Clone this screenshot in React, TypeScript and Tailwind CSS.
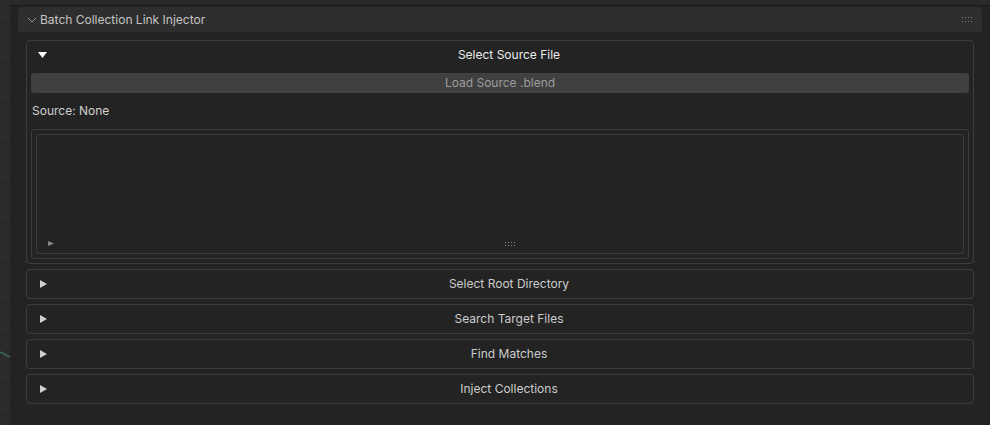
import React from "react";

const font = { fontFamily: "Inter, 'Noto Sans', sans-serif" };

function TriRight() {
  return (
    <svg width="7" height="8" viewBox="0 0 7 8" className="shrink-0 ml-[13px]">
      <path d="M0 0 L7 4 L0 8 Z" fill="currentColor" />
    </svg>
  );
}

function TriDown() {
  return (
    <svg width="9" height="6" viewBox="0 0 9 6" className="shrink-0 ml-[11px]">
      <path d="M0 0 L9 0 L4.5 6 Z" fill="#ffffff" />
    </svg>
  );
}

function Grip() {
  return (
    <svg width="11" height="6" viewBox="0 0 11 6">
      {[0, 3, 6, 9].map((x) => (
        <g key={x}>
          <rect x={x} y={0} width="1" height="1" fill="#7a7a7a" />
          <rect x={x} y={4} width="1" height="1" fill="#7a7a7a" />
        </g>
      ))}
    </svg>
  );
}

function Collapsed({ title }: { title: string }) {
  return (
    <div className="h-[30px] rounded-[4px] border border-[#3d3d3d] flex items-center">
      <div className="w-[18px] shrink-0 flex items-center text-[#d0d0d0]">
        <TriRight />
      </div>
      <div className="flex-1 text-center text-[12px] text-[#cccccc]">{title}</div>
    </div>
  );
}

export default function App() {
  return (
    <div className="w-[990px] h-[425px] flex bg-[#232323] overflow-hidden" style={font}>
      <div className="w-[10px] h-full bg-[#2b2b2b] relative overflow-hidden">
        <svg width="10" height="425" className="absolute inset-0">
          {[20, 60, 100, 140, 180, 220, 260, 300, 330, 380, 410].map((y) => (
            <line key={y} x1="0" y1={y} x2="10" y2={y - 4} stroke="#353535" strokeWidth="1" />
          ))}
          <line x1="0" y1="352" x2="10" y2="357" stroke="#3f6f55" strokeWidth="1.5" />
        </svg>
      </div>
      <div className="flex-1 flex flex-col">
        <div className="h-[6px] bg-[#2a2a2a] border-b border-[#1b1b1b]" />
        <div className="pl-[8px] pr-[8px] pt-[1px] flex-1 flex flex-col">
          <div className="h-[25px] bg-[#2e2e2e] rounded-t-[4px] flex items-center">
            <svg width="10" height="6" viewBox="0 0 10 6" className="ml-[9px] mr-[3px] mt-[1px]">
              <path d="M1 1 L5 5 L9 1" stroke="#9a9a9a" strokeWidth="1" fill="none" />
            </svg>
            <span className="text-[12px] text-[#c4c4c4] mt-[1px]">Batch Collection Link Injector</span>
            <div className="ml-auto mr-[9px] flex items-center mt-[1px]">
              <Grip />
            </div>
          </div>
          <div className="pl-[8px] pr-[8px] pt-[8px] flex flex-col gap-[5px]">
            <div className="rounded-[4px] border border-[#3d3d3d] flex flex-col pb-[4px]">
              <div className="h-[27px] mb-[5px] flex items-center">
                <div className="w-[18px] shrink-0 flex items-center">
                  <TriDown />
                </div>
                <div className="flex-1 text-center text-[12px] text-[#ececec]">Select Source File</div>
              </div>
              <div className="px-[4px]">
                <div className="h-[20px] rounded-[3px] bg-[#404040] flex items-center justify-center text-[12px] text-[#9c9c9c]">
                  Load Source .blend
                </div>
              </div>
              <div className="h-[36px] flex items-center px-[5px] text-[12px] text-[#d0d0d0]">Source: None</div>
              <div className="mx-[4px] rounded-[3px] border border-[#3d3d3d] p-[4px]">
                <div className="h-[120px] rounded-[3px] border border-[#3d3d3d] flex items-end pb-[7px]">
                  <div className="pl-[11px] text-[#8a8a8a] flex items-center">
                    <svg width="6" height="5" viewBox="0 0 6 5" className="shrink-0">
                      <path d="M0 0 L6 2.5 L0 5 Z" fill="currentColor" />
                    </svg>
                  </div>
                  <div className="flex-1 flex justify-center pl-[3px]">
                    <svg width="10" height="4" viewBox="0 0 10 4">
                      {[0, 3, 6, 9].map((x) => (
                        <g key={x}>
                          <rect x={x} y={0} width="1" height="1" fill="#8a8a8a" />
                          <rect x={x} y={3} width="1" height="1" fill="#8a8a8a" />
                        </g>
                      ))}
                    </svg>
                  </div>
                </div>
              </div>
            </div>
            <Collapsed title="Select Root Directory" />
            <Collapsed title="Search Target Files" />
            <Collapsed title="Find Matches" />
            <Collapsed title="Inject Collections" />
          </div>
        </div>
      </div>
    </div>
  );
}
